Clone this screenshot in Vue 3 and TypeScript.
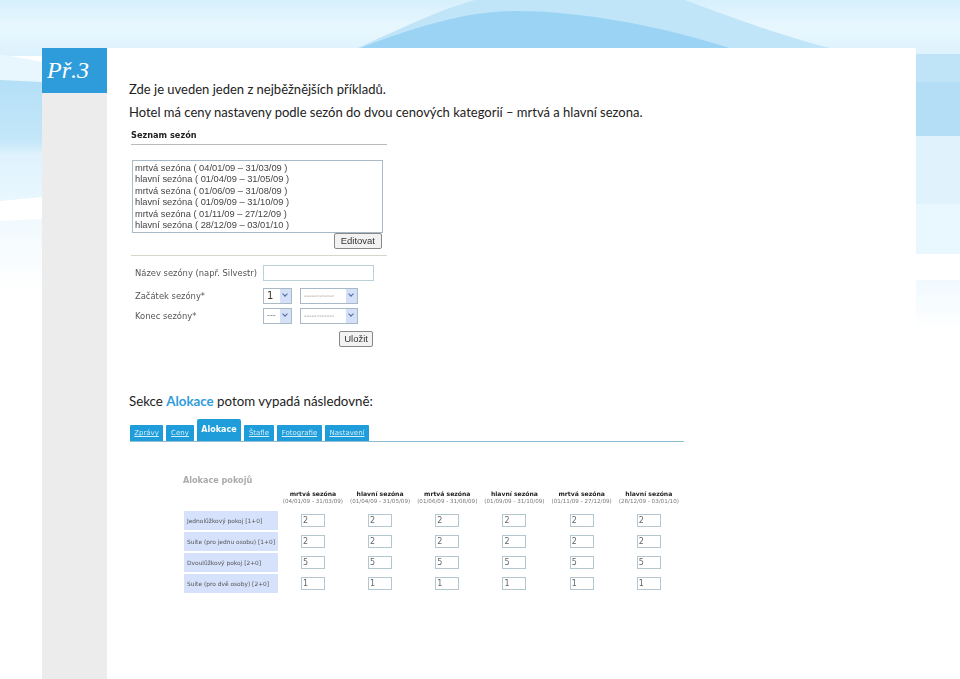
<script setup lang="ts">
const seasons = [
  'mrtvá sezóna ( 04/01/09 – 31/03/09 )',
  'hlavní sezóna ( 01/04/09 – 31/05/09 )',
  'mrtvá sezóna ( 01/06/09 – 31/08/09 )',
  'hlavní sezóna ( 01/09/09 – 31/10/09 )',
  'mrtvá sezóna ( 01/11/09 – 27/12/09 )',
  'hlavní sezóna ( 28/12/09 – 03/01/10 )'
]

const tabs = [
  { label: 'Zprávy', active: false },
  { label: 'Ceny', active: false },
  { label: 'Alokace', active: true },
  { label: 'Štafle', active: false },
  { label: 'Fotografie', active: false },
  { label: 'Nastavení', active: false }
]

const columns = [
  { name: 'mrtvá sezóna', range: '(04/01/09 - 31/03/09)' },
  { name: 'hlavní sezóna', range: '(01/04/09 - 31/05/09)' },
  { name: 'mrtvá sezóna', range: '(01/06/09 - 31/08/09)' },
  { name: 'hlavní sezóna', range: '(01/09/09 - 31/10/09)' },
  { name: 'mrtvá sezóna', range: '(01/11/09 - 27/12/09)' },
  { name: 'hlavní sezóna', range: '(28/12/09 - 03/01/10)' }
]

const rooms = [
  { name: 'Jednolůžkový pokoj [1+0]', count: '2' },
  { name: 'Suite (pro jednu osobu) [1+0]', count: '2' },
  { name: 'Dvoulůžkový pokoj [2+0]', count: '5' },
  { name: 'Suite (pro dvě osoby) [2+0]', count: '1' }
]
</script>

<template>
  <div class="page">
    <svg class="backdrop" viewBox="0 0 960 679" preserveAspectRatio="none">
      <defs>
        <linearGradient id="sky" x1="0" y1="0" x2="0" y2="1">
          <stop offset="0" stop-color="#d6f0fc" />
          <stop offset="0.5" stop-color="#e8f7fe" />
          <stop offset="1" stop-color="#dcf2fc" />
        </linearGradient>
        <linearGradient id="side" x1="0" y1="0" x2="0" y2="1">
          <stop offset="0" stop-color="#b4dff7" />
          <stop offset="0.5" stop-color="#c4e7f9" />
          <stop offset="0.62" stop-color="#dff2fd" />
          <stop offset="1" stop-color="#e9f7fe" />
        </linearGradient>
        <linearGradient id="fade" x1="0" y1="0" x2="0" y2="1">
          <stop offset="0" stop-color="#f0f9fe" />
          <stop offset="1" stop-color="#ffffff" />
        </linearGradient>
      </defs>
      <rect width="960" height="679" fill="#ffffff" />
      <rect width="960" height="56" fill="url(#sky)" />
      <!-- left strip -->
      <path d="M0 54 L42 62 L42 82 L0 82 Z" fill="#e8f7fe" />
      <path d="M0 80 L42 82 L42 197 L0 201 Z" fill="url(#side)" />
      <path d="M0 221 L42 219 L42 290 L0 290 Z" fill="url(#fade)" />
      <!-- wave behind the sheet -->
      <path d="M340 56 C390 34 440 8 483 -2 L679 -2 C740 20 800 44 867 56 Z" fill="#c0e4f8" />
      <path d="M340 56 C400 32 460 11 516 11 C590 11 680 30 753 56 Z" fill="#9ad3f3" />
      <!-- right strip -->
      <rect x="916" y="54" width="44" height="28" fill="#bfe4f8" />
      <rect x="916" y="82" width="44" height="54" fill="#b3def6" />
      <rect x="916" y="136" width="44" height="68" fill="#e0f3fd" />
      <rect x="916" y="204" width="44" height="50" fill="#e9f7fe" />
      <rect x="916" y="280" width="44" height="50" fill="url(#fade)" />
    </svg>

    <main class="sheet">
      <aside class="rail">
        <div class="badge">Př.3</div>
      </aside>

      <section class="content">
        <p class="intro">Zde je uveden jeden z nejběžnějších příkladů.</p>
        <p class="intro second">Hotel má ceny nastaveny podle sezón do dvou cenových kategorií – mrtvá a hlavní sezona.</p>

        <div class="seasons">
          <h4 class="seasons-title">Seznam sezón</h4>
          <div class="listbox">
            <div v-for="s in seasons" :key="s">{{ s }}</div>
          </div>
          <div class="btn-row"><span class="btn">Editovat</span></div>

          <div class="form">
            <div class="form-row">
              <label>Název sezóny (např. Silvestr)</label>
              <span class="text-field"></span>
            </div>
            <div class="form-row">
              <label>Začátek sezóny*</label>
              <span class="select small dark">1<i class="arrow"></i></span>
              <span class="select wide">------------<i class="arrow"></i></span>
            </div>
            <div class="form-row">
              <label>Konec sezóny*</label>
              <span class="select small">---<i class="arrow"></i></span>
              <span class="select wide">------------<i class="arrow"></i></span>
            </div>
          </div>
          <div class="btn-row save"><span class="btn">Uložit</span></div>
        </div>

        <p class="intro section">Sekce <b>Alokace</b> potom vypadá následovně:</p>

        <div class="alloc">
          <nav class="tabs">
            <span v-for="t in tabs" :key="t.label" class="tab" :class="{ active: t.active }">{{ t.label }}</span>
          </nav>
          <h5 class="alloc-title">Alokace pokojů</h5>
          <div class="grid">
            <span></span>
            <div v-for="(c, i) in columns" :key="i" class="col-head">
              <strong>{{ c.name }}</strong>
              <small>{{ c.range }}</small>
            </div>
            <template v-for="r in rooms" :key="r.name">
              <div class="room">{{ r.name }}</div>
              <div v-for="(c, i) in columns" :key="i" class="cell">
                <span class="count">{{ r.count }}</span>
              </div>
            </template>
          </div>
        </div>
      </section>
    </main>
  </div>
</template>

<style scoped>
.page {
  position: relative;
  width: 960px;
  height: 679px;
  overflow: hidden;
  font-family: Lato, "Noto Sans", sans-serif;
}

.backdrop {
  position: absolute;
  inset: 0;
  width: 100%;
  height: 100%;
}

.sheet {
  position: relative;
  display: flex;
  width: 874px;
  height: 631px;
  margin: 0 0 0 42px;
  top: 48px;
  background: #fff;
}

.rail {
  width: 65px;
  flex: none;
  background: #ececec;
}

.badge {
  height: 45px;
  padding-left: 5px;
  line-height: 45px;
  background: #2e9cdb;
  color: #fff;
  font-family: "Liberation Serif", serif;
  font-style: italic;
  font-size: 24px;
}

.content {
  flex: 1;
  padding: 32px 0 0 22px;
}

.intro {
  margin: 0;
  font-size: 13px;
  line-height: 18px;
  color: #222;
  white-space: nowrap;
}

.second {
  margin-top: 5px;
}

.section {
  margin-top: 45px;
  font-size: 13.3px;
}

.section b {
  color: #2e9cdb;
  font-weight: 700;
}

.seasons {
  width: 256px;
  margin: 9px 0 0 2px;
  font-family: "Liberation Sans", sans-serif;
  color: #555;
  filter: blur(0.4px);
}

.seasons-title {
  margin: 0;
  padding-bottom: 3px;
  height: 11px;
  border-bottom: 1px solid #bbb;
  font-family: "DejaVu Sans", sans-serif;
  font-size: 8.2px;
  line-height: 11px;
  color: #222;
}

.listbox {
  box-sizing: border-box;
  width: 251px;
  height: 73px;
  margin: 15px 0 0 1px;
  padding: 2px 2px 0;
  border: 1px solid #a9bac6;
  font-size: 9.3px;
  line-height: 11.4px;
  color: #444;
}

.btn-row {
  display: flex;
  justify-content: flex-end;
  padding-right: 5px;
  height: 16px;
}

.btn {
  display: block;
  padding: 0 6px;
  border: 1px solid #888;
  border-radius: 2px;
  background: #f2f2f2;
  font-size: 9.5px;
  line-height: 14px;
  color: #333;
}

.form {
  margin-top: 6px;
  padding-top: 7px;
  border-top: 1px solid #d8d6c8;
}

.form-row {
  display: flex;
  align-items: center;
  height: 20px;
  gap: 5px;
  font-family: "DejaVu Sans", sans-serif;
}

.form-row:first-child {
  margin-bottom: 3px;
}

.form-row label {
  width: 123px;
  padding-left: 4px;
  font-size: 8.4px;
  color: #555;
  white-space: nowrap;
}

.text-field {
  width: 109px;
  height: 14px;
  border: 1px solid #bcd0da;
}

.select {
  position: relative;
  box-sizing: border-box;
  height: 16px;
  padding-left: 3px;
  border: 1px solid #a9bac6;
  font-size: 8px;
  line-height: 14px;
  color: #777;
}

.select.small {
  width: 29px;
}

.select.dark {
  color: #333;
  font-size: 10px;
  font-weight: 400;
}

.select.wide {
  width: 58px;
  margin-left: 3px;
  font-size: 7px;
}

.arrow {
  position: absolute;
  top: 0;
  right: 0;
  width: 11px;
  height: 14px;
  background: #d3e0f7;
}

.arrow::after {
  content: "";
  position: absolute;
  left: 3px;
  top: 3px;
  width: 3px;
  height: 3px;
  border-right: 1.5px solid #4a6a9c;
  border-bottom: 1.5px solid #4a6a9c;
  transform: rotate(45deg);
}

.save {
  margin-top: 5px;
  padding-right: 14px;
}

.save .btn {
  padding: 0 4px;
}

.alloc {
  margin: 9px 0 0 1px;
  width: 554px;
  filter: blur(0.4px);
}

.tabs {
  display: grid;
  grid-template-columns: 33px 28px 44px 30px 45px 44px;
  align-items: end;
  gap: 3px;
  height: 22px;
  border-bottom: 1px solid #8fbdd2;
}

.tab {
  height: 16px;
  background: #1f9ddb;
  color: #d4eefa;
  border-radius: 1px 1px 0 0;
  font-family: "DejaVu Sans", sans-serif;
  font-size: 7px;
  line-height: 16px;
  text-align: center;
  text-decoration: underline;
}

.tab.active {
  height: 22px;
  border-radius: 2px 2px 0 0;
  font-size: 8px;
  font-weight: 700;
  line-height: 22px;
  color: #fff;
  text-decoration: none;
}

.alloc-title {
  margin: 33px 0 0 53px;
  height: 11px;
  font-family: "DejaVu Sans", sans-serif;
  font-size: 8.1px;
  font-weight: 700;
  line-height: 11px;
  color: #aaa;
}

.grid {
  display: grid;
  grid-template-columns: 95.3px repeat(6, 67.2px);
  grid-auto-rows: 21px;
  margin: 4px 0 0 54px;
  font-family: "DejaVu Sans", sans-serif;
}

.col-head {
  text-align: center;
  white-space: nowrap;
  line-height: 7.5px;
}

.col-head strong {
  display: block;
  font-size: 6.1px;
  color: #222;
}

.col-head small {
  display: block;
  font-size: 5.6px;
  color: #777;
}

.room {
  display: flex;
  align-items: center;
  width: 91px;
  height: 19px;
  padding-left: 3px;
  background: #d6e2fb;
  font-size: 5.9px;
  color: #555;
  white-space: nowrap;
  overflow: hidden;
}

.cell {
  display: flex;
  justify-content: center;
  padding-top: 3px;
}

.count {
  box-sizing: border-box;
  width: 24px;
  height: 13px;
  padding-left: 1px;
  border: 1px solid #b4c6d0;
  font-size: 8px;
  line-height: 11px;
  color: #666;
}
</style>

<style>
html, body {
  margin: 0;
  background: #fff;
}
</style>
